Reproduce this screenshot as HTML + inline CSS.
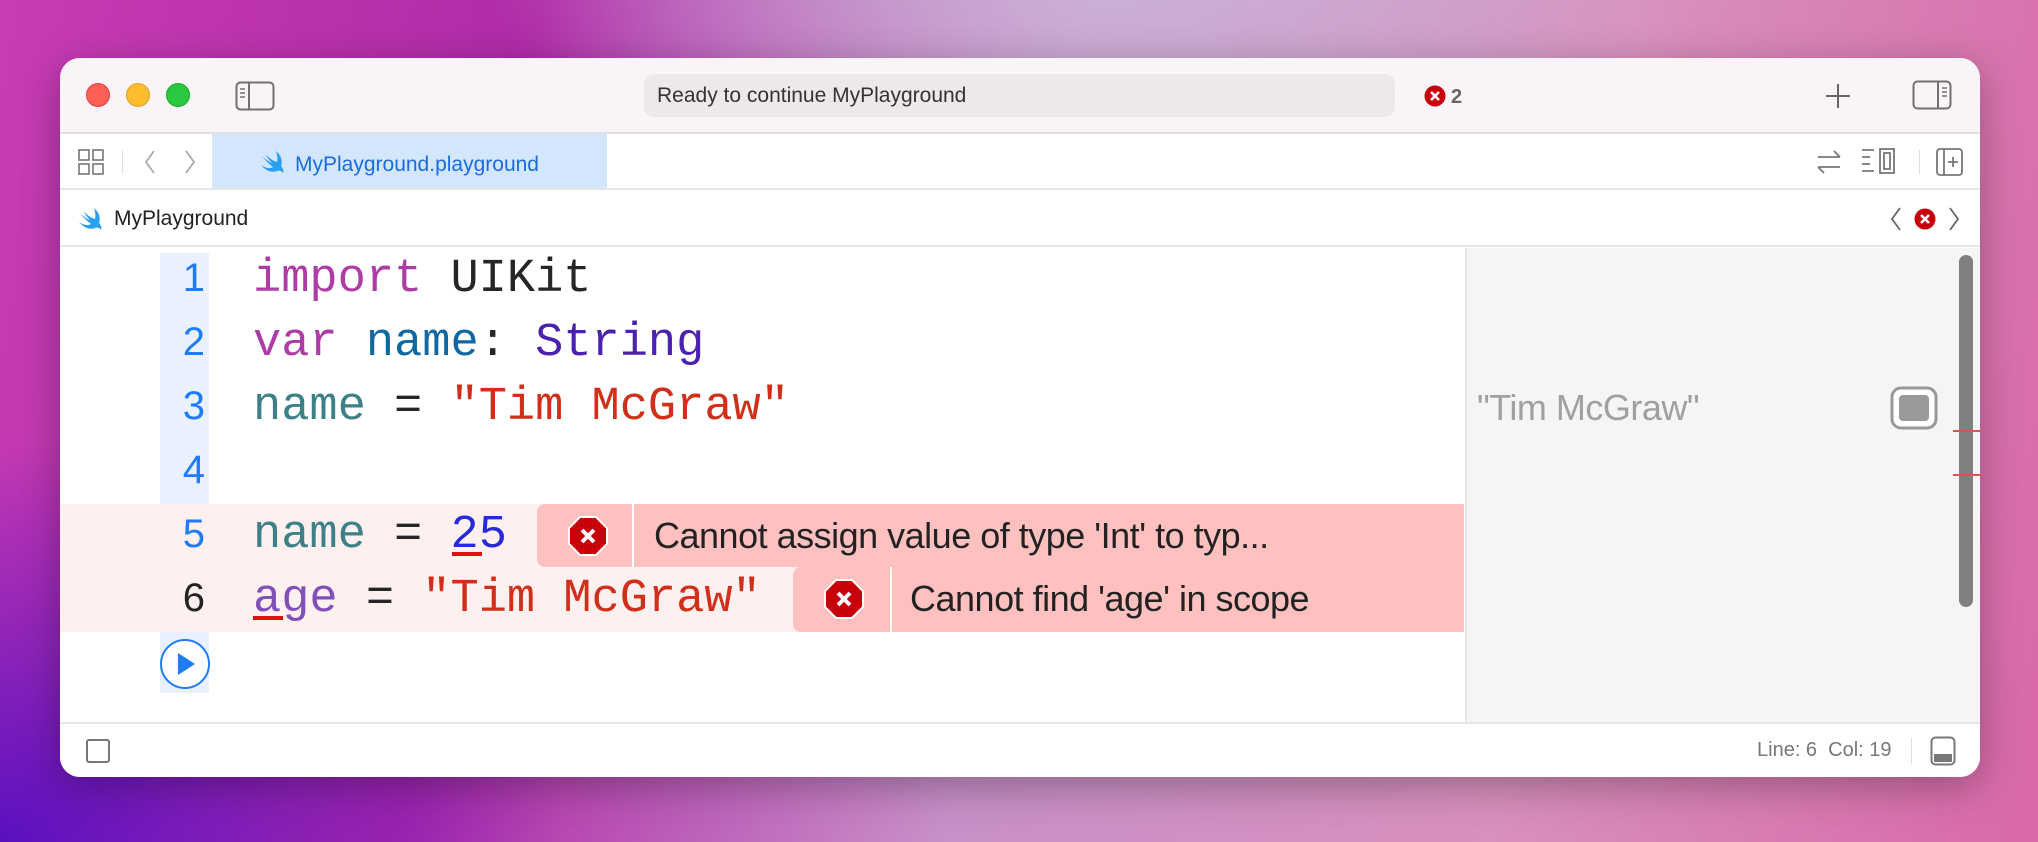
<!DOCTYPE html>
<html><head><meta charset="utf-8"><style>
*{margin:0;padding:0;box-sizing:border-box}
body{width:2038px;height:842px;overflow:hidden;position:relative;font-family:"Liberation Sans",sans-serif;
background:radial-gradient(ellipse 900px 600px at 1100px -100px,#cbb8d8 0%,rgba(203,184,216,0) 70%),
radial-gradient(ellipse 700px 500px at 0px 842px,#5a10c0 0%,rgba(90,16,192,0) 80%),
linear-gradient(100deg,#c83cb4 0%,#b02aa8 25%,#c890c8 50%,#d890bc 75%,#d868a8 100%);}
.abs{position:absolute}
.win{position:absolute;left:60px;top:58px;width:1920px;height:719px;background:#fff;border-radius:20px;overflow:hidden;box-shadow:0 10px 40px rgba(0,0,0,.3)}
.title{position:absolute;left:0;top:0;width:1920px;height:76px;background:#f8f4f8;border-bottom:2px solid #e2dfe2}
.tabbar{position:absolute;left:0;top:76px;width:1920px;height:56px;background:#fff;border-bottom:2px solid #e6e6e6}
.crumb{position:absolute;left:0;top:132px;width:1920px;height:57px;background:#fff;border-bottom:2px solid #e6e6e6}
.code{font-family:"Liberation Mono",monospace;font-size:47px;position:absolute;left:193px;white-space:pre;line-height:64px}
.ln{font-family:"Liberation Sans",sans-serif;font-size:40px;position:absolute;left:100px;width:49px;text-align:right;padding-right:4px;line-height:64px;color:#1f7cf6}
.msg{font-size:36px;color:#222;position:absolute;line-height:64px;white-space:nowrap;letter-spacing:-0.5px}
.dot{position:absolute;width:24px;height:24px;border-radius:50%;top:25px}
</style></head><body>
<div class="win">
 <div class="title">
  <div class="dot" style="left:26px;background:#fe5f57;border:1px solid #e0443e"></div>
  <div class="dot" style="left:66px;background:#febc2e;border:1px solid #dea123"></div>
  <div class="dot" style="left:106px;background:#28c840;border:1px solid #1aab29"></div>
  <svg class="abs" style="left:175px;top:23px" width="40" height="30" viewBox="0 0 40 30"><rect x="1.5" y="1.5" width="37" height="27" rx="4" fill="none" stroke="#707070" stroke-width="2"/><line x1="14" y1="2" x2="14" y2="28" stroke="#707070" stroke-width="2"/><path d="M5 8h5M5 12h5M5 16h5" stroke="#707070" stroke-width="1.6"/></svg>
  <div class="abs" style="left:584px;top:16px;width:751px;height:43px;background:#ece8ec;border-radius:10px;font-size:21px;color:#333;line-height:43px;padding-left:13px">Ready to continue MyPlayground</div>
  <svg class="abs" style="left:1364px;top:27px" width="22" height="22" viewBox="0 0 22 22"><circle cx="11" cy="11" r="10.5" fill="#c8000a"/><path d="M7 7l8 8M15 7l-8 8" stroke="#fff" stroke-width="2.6"/></svg>
  <div class="abs" style="left:1391px;top:28px;font-size:20px;color:#666;font-weight:bold">2</div>
  <svg class="abs" style="left:1765px;top:25px" width="26" height="26"><path d="M13 1v24M1 13h24" stroke="#666" stroke-width="2"/></svg>
  <svg class="abs" style="left:1852px;top:22px" width="40" height="30" viewBox="0 0 40 30"><rect x="1.5" y="1.5" width="37" height="27" rx="4" fill="none" stroke="#707070" stroke-width="2"/><line x1="26" y1="2" x2="26" y2="28" stroke="#707070" stroke-width="2"/><path d="M30 8h5M30 12h5M30 16h5" stroke="#707070" stroke-width="1.6"/></svg>
 </div>
 <div class="tabbar">
  <svg class="abs" style="left:18px;top:15px" width="26" height="26" viewBox="0 0 26 26" fill="none" stroke="#777" stroke-width="1.6"><rect x="1" y="1" width="10" height="10"/><rect x="15" y="1" width="10" height="10"/><rect x="1" y="15" width="10" height="10"/><rect x="15" y="15" width="10" height="10"/></svg>
  <div class="abs" style="left:62px;top:16px;width:1px;height:24px;background:#ddd"></div>
  <svg class="abs" style="left:80px;top:15px" width="60" height="26" fill="none" stroke="#aaa" stroke-width="1.8"><path d="M14 2L6 13l8 11M46 2l8 11-8 11"/></svg>
  <div class="abs" style="left:152px;top:0;width:395px;height:54px;background:#d4e6fc"></div>
  <svg class="abs" style="left:200px;top:16px" width="26" height="24" viewBox="0 0 26 24"><path d="M16 1c5 4 7 10 5 15 2 2 3 5 2 7-1-2-4-3-6-2-5 2-11 0-16-6 4 3 9 4 12 2C9 14 5 10 2 6c3 3 7 6 10 7C9 10 7 7 5 4c4 4 8 7 12 8 1-4 0-8-1-11z" fill="#2aa0f0"/></svg>
  <div class="abs" style="left:235px;top:19px;font-size:21px;color:#1a6cdc">MyPlayground.playground</div>
  <svg class="abs" style="left:1754px;top:14px" width="30" height="28" fill="none" stroke="#777" stroke-width="1.8"><path d="M4 9h22M20 3l6 6M26 19H4M10 25l-6-6"/></svg>
  <svg class="abs" style="left:1800px;top:13px" width="40" height="30" fill="none" stroke="#777" stroke-width="1.8"><path d="M2 3h12M2 10h8M2 17h8M2 24h12"/><rect x="20" y="2" width="14" height="24"/><rect x="24" y="6" width="6" height="16"/></svg>
  <div class="abs" style="left:1859px;top:16px;width:1px;height:24px;background:#ddd"></div>
  <svg class="abs" style="left:1875px;top:13px" width="30" height="30" fill="none" stroke="#777" stroke-width="1.8"><rect x="2" y="2" width="25" height="26" rx="3"/><path d="M9 2v26M18 10v10M13 15h10"/></svg>
 </div>
 <div class="crumb">
  <svg class="abs" style="left:18px;top:17px" width="26" height="24" viewBox="0 0 26 24"><path d="M16 1c5 4 7 10 5 15 2 2 3 5 2 7-1-2-4-3-6-2-5 2-11 0-16-6 4 3 9 4 12 2C9 14 5 10 2 6c3 3 7 6 10 7C9 10 7 7 5 4c4 4 8 7 12 8 1-4 0-8-1-11z" fill="#2aa0f0"/></svg>
  <div class="abs" style="left:54px;top:17px;font-size:21px;color:#222">MyPlayground</div>
  <svg class="abs" style="left:1828px;top:16px" width="74" height="26" fill="none" stroke="#666" stroke-width="1.8"><path d="M12 2L4 13l8 11M62 2l8 11-8 11"/></svg>
  <svg class="abs" style="left:1854px;top:18px" width="22" height="22" viewBox="0 0 22 22"><circle cx="11" cy="11" r="10.5" fill="#c8000a"/><path d="M7 7l8 8M15 7l-8 8" stroke="#fff" stroke-width="2.6"/></svg>
 </div>
 <!-- editor -->
 <div class="abs" style="left:100px;top:195px;width:49px;height:440px;background:#e8f1fd"></div>
 <div class="abs" style="left:0;top:446px;width:1404px;height:128px;background:#fdf0ef"></div>
 <div class="abs" style="left:477px;top:446px;width:927px;height:63px;background:#ffc0c0;border-radius:8px 0 0 8px"></div>
 <div class="abs" style="left:572px;top:446px;width:2px;height:63px;background:#fff"></div>
 <div class="abs" style="left:733px;top:509px;width:671px;height:65px;background:#ffc0c0;border-radius:8px 0 0 8px"></div>
 <div class="abs" style="left:830px;top:509px;width:2px;height:65px;background:#fff"></div>
 <svg class="abs" style="left:508px;top:458px" width="40" height="40" viewBox="0 0 40 40"><polygon points="12,1 28,1 39,12 39,28 28,39 12,39 1,28 1,12" fill="#c8000a" stroke="#fff" stroke-width="2"/><path d="M14 14l12 12M26 14l-12 12" stroke="#fff" stroke-width="4"/></svg>
 <svg class="abs" style="left:764px;top:521px" width="40" height="40" viewBox="0 0 40 40"><polygon points="12,1 28,1 39,12 39,28 28,39 12,39 1,28 1,12" fill="#c8000a" stroke="#fff" stroke-width="2"/><path d="M14 14l12 12M26 14l-12 12" stroke="#fff" stroke-width="4"/></svg>
 <div class="msg" style="left:594px;top:446px">Cannot assign value of type 'Int' to typ...</div>
 <div class="msg" style="left:850px;top:509px">Cannot find 'age' in scope</div>
 <div class="ln" style="top:188px">1</div>
 <div class="ln" style="top:252px">2</div>
 <div class="ln" style="top:316px">3</div>
 <div class="ln" style="top:380px">4</div>
 <div class="ln" style="top:444px">5</div>
 <div class="ln" style="top:508px;color:#222">6</div>
 <div class="code" style="top:190px"><span style="color:#ad3da4">import</span> <span style="color:#262626">UIKit</span></div>
 <div class="code" style="top:254px"><span style="color:#ad3da4">var</span> <span style="color:#0f68a0">name</span><span style="color:#262626">:</span> <span style="color:#4b21b0">String</span></div>
 <div class="code" style="top:318px"><span style="color:#3e8087">name</span> <span style="color:#262626">=</span> <span style="color:#d12f1b">"Tim McGraw"</span></div>
 <div class="code" style="top:446px"><span style="color:#3e8087">name</span> <span style="color:#262626">=</span> <span style="color:#272ad8">25</span></div>
 <div class="code" style="top:510px"><span style="color:#804fb8">age</span> <span style="color:#262626">=</span> <span style="color:#d12f1b">"Tim McGraw"</span></div>
 <div class="abs" style="left:392px;top:494px;width:30px;height:4px;background:#e01010"></div>
 <div class="abs" style="left:193px;top:558px;width:30px;height:4px;background:#e01010"></div>
 <svg class="abs" style="left:99px;top:580px" width="52" height="52" viewBox="0 0 52 52"><circle cx="26" cy="26" r="24" fill="#fff" stroke="#1f7cf6" stroke-width="2"/><path d="M19 15l17 11-17 11z" fill="#1f7cf6"/></svg>
 <!-- results -->
 <div class="abs" style="left:1405px;top:190px;width:545px;height:474px;background:#f5f5f5;border-left:2px solid #e6e6e6;border-right:2px solid #e6e6e6"></div>
 <div class="abs" style="left:1417px;top:318px;font-size:36px;color:#a0a0a0;line-height:64px;letter-spacing:-0.5px">"Tim McGraw"</div>
 <svg class="abs" style="left:1830px;top:328px" width="48" height="44" viewBox="0 0 48 44"><rect x="2" y="2" width="44" height="40" rx="9" fill="#fff" stroke="#999" stroke-width="3"/><rect x="9" y="9" width="30" height="26" rx="4" fill="#999"/></svg>
 <div class="abs" style="left:1899px;top:197px;width:14px;height:352px;border-radius:7px;background:#808080"></div>
 <div class="abs" style="left:1893px;top:372px;width:27px;height:2px;background:#e05050"></div>
 <div class="abs" style="left:1893px;top:416px;width:27px;height:2px;background:#e05050"></div>
 <!-- bottom bar -->
 <div class="abs" style="left:0;top:664px;width:1920px;height:55px;background:#fff;border-top:2px solid #e6e6e6"></div>
 <div class="abs" style="left:26px;top:681px;width:24px;height:24px;border:2px solid #777;border-radius:3px"></div>
 <div class="abs" style="left:1697px;top:681px;font-size:20px;color:#777;white-space:pre">Line: 6  Col: 19</div>
 <div class="abs" style="left:1851px;top:680px;width:1px;height:26px;background:#ddd"></div>
 <svg class="abs" style="left:1870px;top:678px" width="26" height="30" viewBox="0 0 26 30"><rect x="1.5" y="1.5" width="23" height="27" rx="4" fill="none" stroke="#777" stroke-width="2"/><rect x="4" y="18" width="18" height="8" fill="#777"/></svg>
</div>
</body></html>
